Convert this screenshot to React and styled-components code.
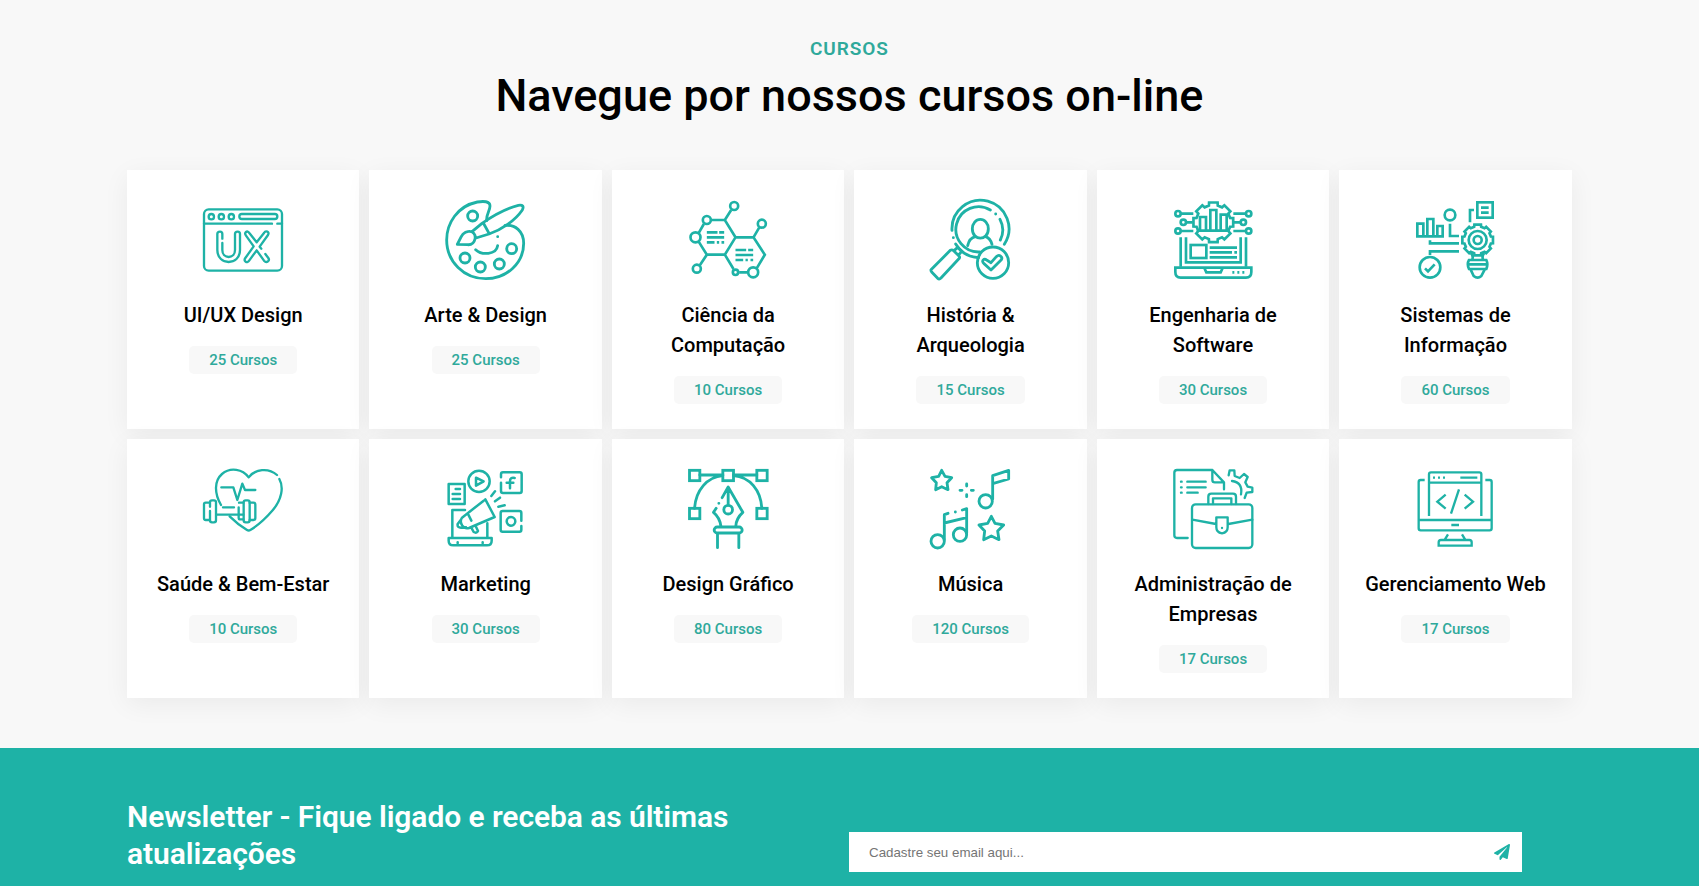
import React from "react";
import styled, { createGlobalStyle } from "styled-components";
import { FaPaperPlane } from "react-icons/fa";

const TEAL = "#1eb2a6";

const GlobalStyle = createGlobalStyle`
  * { margin: 0; padding: 0; box-sizing: border-box; }
  body { font-family: Roboto, "Liberation Sans", sans-serif; background: #f8f8f8; }
`;

const Page = styled.main`
  height: 100vh;
  overflow: hidden;
`;

const Courses = styled.section`
  padding: 33px 127.3px 50px 127px;
  background: #f8f8f8;
`;

const Header = styled.header`
  height: 137px;
  text-align: center;
`;

const Eyebrow = styled.p`
  color: #2fa99b;
  font-size: 19px;
  font-weight: 600;
  line-height: 31px;
  letter-spacing: 0.9px;
  text-transform: uppercase;
`;

const Title = styled.h1`
  color: #000;
  font-size: 45px;
  font-weight: 500;
  line-height: 64px;
`;

const Grid = styled.div`
  display: grid;
  grid-template-columns: repeat(6, 1fr);
  gap: 10px;
`;

const Card = styled.article`
  display: flex;
  flex-direction: column;
  align-items: center;
  min-height: 259px;
  padding: 30px 20px 25px;
  background: #fff;
  box-shadow: 0 6px 25px rgba(0, 0, 0, 0.06);
`;

const Icon = styled.svg`
  width: 80px;
  height: 80px;
  flex: none;
  overflow: visible;
  fill: none;
  stroke: ${TEAL};
  stroke-width: ${(p) => p.$weight || 7};
  stroke-linecap: ${(p) => (p.$square ? "butt" : "round")};
  stroke-linejoin: ${(p) => (p.$square ? "miter" : "round")};
`;

const CardTitle = styled.h2`
  margin-top: 20px;
  color: #000;
  font-size: 20px;
  font-weight: 500;
  line-height: 30px;
  text-align: center;
`;

const Badge = styled.span`
  margin-top: 16px;
  padding: 0 20px;
  border-radius: 5px;
  background: #f8f8f8;
  color: #2fa99b;
  font-size: 15px;
  font-weight: 500;
  line-height: 28px;
`;

const Newsletter = styled.section`
  display: grid;
  grid-template-columns: 1fr 1fr;
  align-items: end;
  padding: 50px 128px 50px 127px;
  background: ${TEAL};
`;

const NewsletterTitle = styled.h2`
  padding-right: 80px;
  color: #fff;
  font-size: 30px;
  font-weight: 600;
  line-height: 37px;
  letter-spacing: -0.08px;
`;

const Form = styled.form`
  display: flex;
  align-items: center;
  height: 40px;
  margin-right: 49px;
  background: #fff;
`;

const EmailInput = styled.input`
  flex: 1;
  height: 100%;
  padding: 0 20px;
  border: 0;
  outline: 0;
  background: transparent;
  font: 13.333px "Liberation Sans", Arial, sans-serif;
  &::placeholder { color: #757575; }
`;

const Send = styled.button`
  display: flex;
  margin-right: 12px;
  border: 0;
  background: none;
  color: ${TEAL};
  font-size: 16px;
`;

function gear(cx, cy, outer, inner, teeth) {
  const step = (Math.PI * 2) / teeth;
  const pts = [];
  for (let i = 0; i < teeth; i++) {
    const a = i * step - Math.PI / 2;
    [[-0.33, inner], [-0.27, outer], [0.27, outer], [0.33, inner]].forEach(([k, r]) =>
      pts.push(`${(cx + r * Math.cos(a + k * step)).toFixed(1)} ${(cy + r * Math.sin(a + k * step)).toFixed(1)}`)
    );
  }
  return `M${pts.join("L")}Z`;
}

const UxIcon = () => (
  <Icon viewBox="39 30 240 240" $weight={7}>
    <rect x="42" y="58" width="234" height="184" rx="14" />
    <path d="M42 101H246M262 101H276" />
    <circle cx="64" cy="80" r="8" /><circle cx="94" cy="80" r="8" /><circle cx="124" cy="80" r="8" />
    <rect x="148" y="72" width="114" height="15" rx="7.5" />
    <path d="M97 146V132Q97 125 90 125Q82 125 82 132V180C82 228 150 228 150 180V132Q150 125 143 125Q135 125 135 132V180C135 208 97 208 97 180V159" />
    <path d="M214 176L209 170L234 135Q238 128 232 125Q226 122 222 129L200 157L178 129Q173 122 168 126Q163 130 168 137L191 169L166 204Q161 211 167 215Q173 219 178 211L200 181L222 212Q228 219 234 214Q239 210 235 204L226 192" />
  </Icon>
);

const PaletteIcon = () => (
  <Icon viewBox="768 30 240 240" $weight={8.5}>
    <path d="M890 92C888 74 900 62 900 48C900 33 880 33 862 36C802 48 770 100 770 150C770 215 822 266 887 266C952 266 1001 218 1001 160C1001 123 975 103 945 106" />
    <circle cx="848" cy="78" r="15" /><circle cx="825" cy="204" r="15" /><circle cx="871" cy="231" r="15" />
    <circle cx="928" cy="222" r="15" /><circle cx="965" cy="176" r="15" />
    <path d="M802 163C812 146 816 125 836 124C849 123 858 133 855 147C852 160 842 165 832 164ZM846 125L876 100C905 80 945 56 985 46Q1005 43 997 60C975 92 935 119 897 132L858 144M880 99L896 128M857 179C875 196 919 195 923 167M923 140h.1" />
  </Icon>
);

const MoleculeIcon = () => (
  <Icon viewBox="38.5 30 240 240" $weight={8} $square>
    <path d="M108 90H149L181 142L149 194H95L70 154M70 130L86 102M149 90L168 60M181 142H235L269 194L244 236M235 142L252 113M149 194L175 237M192 247H218M95 194L74 226" />
    <circle cx="177" cy="48" r="12" /><circle cx="95" cy="90" r="12" /><circle cx="61" cy="142" r="15" />
    <circle cx="65" cy="236" r="12" /><circle cx="260" cy="101" r="12" /><circle cx="181" cy="247" r="8" /><circle cx="234" cy="247" r="15" />
    <path d="M95 127H127M132 127H147M95 142H147M95 157H118M125 157H132M139 157H147M181 180H213M219 180H234M181 195H234M181 210H204M211 210H218M226 210H234" />
  </Icon>
);

const SearchIcon = () => (
  <Icon viewBox="768 30 240 240" $weight={8.5}>
    <path d="M831 121A85.5 85.5 0 1 1 988 163M842 162A85.5 85.5 0 0 0 911 203M946 60A68 68 0 1 0 914 186M975 88A68 68 0 0 1 976 150M835 143h.1M962 72h.1" />
    <path d="M892 116A24 28 0 1 1 940 116C940 154 892 154 892 116ZM878 167Q883 144 901 140M932 140Q946 145 951 163" />
    <path d="M826 181L768 239Q767 242 770 246L788 265Q793 269 798 264L853 205Q855 201 852 198L836 182Q831 178 826 181ZM838 181L848 172L860 184L850 196" />
    <circle cx="954" cy="218" r="47" />
    <path d="M936 211C928 202 917 213 927 221L948 240L979 209C984 201 973 191 964 200L948 218Z" />
  </Icon>
);

const SoftwareIcon = () => (
  <Icon viewBox="38 30 240 240" $weight={8} $square>
    <path d={gear(159, 97, 61, 52, 8)} />
    <path d="M119 120V81H137V120M150 120V60H168V120M181 120V74H199V120M109 122H208" />
    <circle cx="53" cy="71" r="8" /><circle cx="69" cy="97" r="8" /><circle cx="53" cy="123" r="8" />
    <circle cx="265" cy="71" r="8" /><circle cx="249" cy="97" r="8" /><circle cx="265" cy="123" r="8" />
    <path d="M62 71H99M78 97H97M62 123H99M219 71H256M221 97H240M219 123H256M61 142V230M77 142V217H241V142M257 142V230" />
    <rect x="91" y="165" width="47" height="39" />
    <path d="M148 173H230M148 187H215M222 187H230M148 202H230M45 233H273V246Q273 263 257 263H61Q45 263 45 246ZM132 234L138 247H181L187 234M216 247H222M231 247H237M246 247H252" />
  </Icon>
);

const InfoIcon = () => (
  <Icon viewBox="765 30 240 240" $weight={8} $square>
    <path d="M772 138V101H790V138M802 138V87H820V138M832 138V108H848V138M768 139H852M870 101V138H897M930 97V60H942M897 160H810V151M897 184H810V195" />
    <circle cx="870" cy="75" r="16" /><rect x="952" y="37" width="46" height="46" /><path d="M963 53H986M963 68H986" />
    <circle cx="810" cy="232" r="31" /><path d="M795 235L804 244L824 223" />
    <path d={gear(953, 150, 47, 41, 8)} /><circle cx="953" cy="150" r="27" /><circle cx="953" cy="150" r="12" />
    <path d="M932 189Q941 197 937 208M973 189Q965 197 969 208M927 210H979Q985 222 979 237H927Q920 222 927 210ZM922 223H984M932 239L941 258Q953 268 964 258L974 239" />
  </Icon>
);

const HealthIcon = () => (
  <Icon viewBox="39 27 240 240" $weight={7}>
    <path d="M93 135C73 100 72 63 96 42C122 20 158 28 176 52C195 27 235 22 261 45M268 57C282 82 275 119 248 151C225 178 201 198 181 210Q176 213 171 210C151 198 135 185 119 169" />
    <path d="M94 82H130L142 120L157 71L165 90H196M99 142H132M80 164H160" />
    <path d="M60 180H47Q42 180 42 175V133Q42 128 47 128H60M60 153V181Q60 187 66 187H72Q78 187 78 181V127Q78 121 72 121H66Q60 121 60 127V140M147 128H160M160 178H151Q146 178 146 173V142" />
    <rect x="161" y="121" width="18" height="66" rx="6" /><path d="M179 128H190Q196 128 196 134V174Q196 180 190 180H179" />
  </Icon>
);

const MarketingIcon = () => (
  <Icon viewBox="768 27 240 240" $weight={7.5}>
    <rect x="776" y="72" width="48" height="60" /><path d="M797 87H810M788 102H810M788 117H810" />
    <circle cx="867" cy="64" r="32" /><path d="M858 53L881 64L858 77Z" />
    <path d="M933 52V43Q933 37 939 37H989Q995 37 995 43V93Q995 99 989 99H939Q933 99 933 93V68M974 54Q960 51 960 64V85M950 68H970M994 182V159Q994 153 988 153H938Q932 153 932 159V209Q932 215 938 215H988Q994 215 994 209V198" />
    <circle cx="963" cy="184" r="13" />
    <path d="M904 108L915 94M915 124L930 113M925 140L944 136M825 150H787V233M892 190V233M776 234H905V242Q905 256 891 256H790Q776 256 776 242ZM803 247V250M878 247V250" />
    <path d="M881 122L816 173C806 188 820 209 837 204L914 171L886 118M835 164L844 182M812 180L803 192Q801 204 815 203L828 202M844 203L851 216Q860 221 864 213L857 198" />
  </Icon>
);

const PenIcon = () => (
  <Icon viewBox="38.5 27 240 240" $weight={8.5}>
    <g strokeLinejoin="miter"><rect x="43" y="31" width="31" height="31" /><rect x="143" y="31" width="32" height="31" /><rect x="245" y="31" width="31" height="31" /><rect x="43" y="145" width="31" height="31" /><rect x="245" y="145" width="31" height="31" /></g>
    <path d="M74 45H143M175 45H245M58 145C62 90 96 51 143 47M175 47C224 51 257 90 260 145" />
    <path d="M141 113L159 81L203 157Q183 175 182 198M137 198Q134 173 115 157L123 145M131 130h.1M159 84V135M127 222V263M191 222V263" />
    <circle cx="159" cy="149" r="13" /><rect x="117" y="201" width="84" height="18" rx="9" />
  </Icon>
);

const MusicIcon = () => (
  <Icon viewBox="768 27 240 240" $weight={8.5}>
    <path d="M800 31L810 49L830 53L816 68L819 89L800 80L782 89L784 68L770 53L791 49ZM949 169L960 190L986 195L968 213L972 239L949 228L926 239L929 213L912 195L938 190Z" />
    <path d="M875 72V78M875 104V110M855 91H861M889 91H895M953 117V47L1001 31V57L953 71M808 239V164L819 160M841 156h.1M862 150L875 146V220M808 189L875 173" />
    <circle cx="932" cy="124" r="20" /><circle cx="788" cy="244" r="20" /><circle cx="855" cy="224" r="20" />
  </Icon>
);

const BusinessIcon = () => (
  <Icon viewBox="38 27 240 240" $weight={7}>
    <path d="M82 234H50Q42 234 42 226V38Q42 30 50 30H156L191 67V88M156 30V59Q156 67 164 67H191M62 65h2M81 65H136M62 82h2M81 82H136M62 98h2M81 98H112" />
    <path d="M205 46L208 31H222L223 48L238 54L251 42L262 51L255 67L262 80L276 83V96L259 98L253 114M215 63Q248 67 242 103" />
    <path d="M144 132V110Q144 101 153 101H218Q227 101 227 110V132M158 132V115H213V132" />
    <rect x="95" y="133" width="181" height="131" rx="11" />
    <path d="M96 179L167 192M204 192L276 179M168 172H202V202Q202 218 185 220Q168 218 168 202ZM185 204h.1" />
  </Icon>
);

const WebIcon = () => (
  <Icon viewBox="765 27 240 240" $weight={7} $square>
    <path d="M807 168V43Q807 37 813 37H958Q964 37 964 43V168M807 68H964M819 53H825M834 53H840M849 53H855M901 53H952M794 60H782Q776 60 776 66V205Q776 211 782 211H989Q995 211 995 205V66Q995 60 989 60H976M776 180H995M874 195H897" />
    <path d="M857 104L832 125L857 146M914 104L939 125L914 146M897 88L873 161M864 223L853 241M906 223L917 241M836 257V247Q836 240 843 240H928Q935 240 935 247V257Z" />
  </Icon>
);

const courses = [
  ["UI/UX Design", 25, UxIcon],
  ["Arte & Design", 25, PaletteIcon],
  ["Ciência da Computação", 10, MoleculeIcon],
  ["História & Arqueologia", 15, SearchIcon],
  ["Engenharia de Software", 30, SoftwareIcon],
  ["Sistemas de Informação", 60, InfoIcon],
  ["Saúde & Bem-Estar", 10, HealthIcon],
  ["Marketing", 30, MarketingIcon],
  ["Design Gráfico", 80, PenIcon],
  ["Música", 120, MusicIcon],
  ["Administração de Empresas", 17, BusinessIcon],
  ["Gerenciamento Web", 17, WebIcon],
];

export default function App() {
  return (
    <Page>
      <GlobalStyle />
      <Courses>
        <Header>
          <Eyebrow>Cursos</Eyebrow>
          <Title>Navegue por nossos cursos on-line</Title>
        </Header>
        <Grid>
          {courses.map(([name, count, Drawing]) => (
            <Card key={name}>
              <Drawing />
              <CardTitle>{name}</CardTitle>
              <Badge>{count} Cursos</Badge>
            </Card>
          ))}
        </Grid>
      </Courses>
      <Newsletter>
        <NewsletterTitle>Newsletter - Fique ligado e receba as últimas atualizações</NewsletterTitle>
        <Form>
          <EmailInput type="email" placeholder="Cadastre seu email aqui..." />
          <Send type="button" aria-label="Enviar"><FaPaperPlane /></Send>
        </Form>
      </Newsletter>
    </Page>
  );
}
